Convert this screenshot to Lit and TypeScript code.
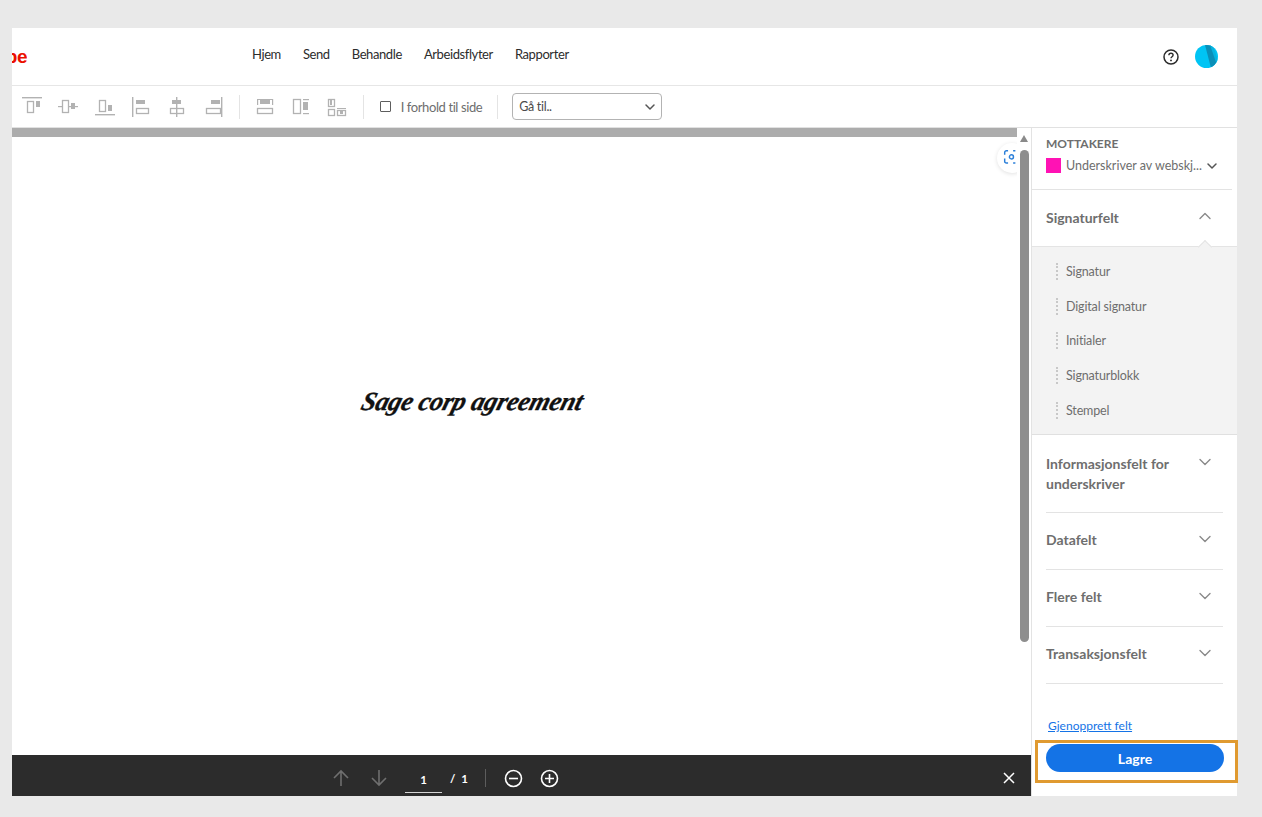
import { LitElement, html, css, svg } from "lit";
import { customElement } from "lit/decorators.js";

const G = "#b2b2b2";
const box = (x: number, y: number, w: number, h: number) =>
  svg`<rect x=${x + 0.5} y=${y + 0.5} width=${w} height=${h} fill="none" stroke=${G} stroke-width="1.3"/>`;
const fill = (x: number, y: number, w: number, h: number) =>
  svg`<rect x=${x} y=${y} width=${w} height=${h} fill=${G}/>`;

const alignIcons = [
  [fill(1, 1, 20, 1.4), box(6, 5, 6, 11), fill(15, 5, 4, 6)],
  [fill(1, 10, 4, 1.2), fill(11, 10, 10, 1.2), box(5, 4, 6, 12), fill(14, 7, 4, 6)],
  [fill(1, 18, 20, 1.4), box(5, 4, 6, 11), fill(14, 9, 4, 6)],
  [fill(2, 1, 1.4, 20), box(6, 12, 12, 5), fill(6, 4, 9, 4)],
  [fill(10, 1, 1.4, 20), fill(6, 4, 9, 4), box(4, 12, 13, 5)],
  [fill(19, 1, 1.4, 20), fill(9, 4, 9, 4), box(4, 12, 14, 5)],
];
const distIcons = [
  [fill(3, 3, 1.2, 6), fill(18, 3, 1.2, 6), fill(6, 4, 10, 4), box(3, 12, 15, 5), fill(3, 3, 16, 1)],
  [box(3, 3, 7, 14), fill(13, 3, 6, 1.2), fill(13, 6, 5, 8), fill(13, 17, 6, 1.2)],
  [box(2, 3, 6, 7), fill(4, 4, 2, 5), box(2, 13, 6, 6), fill(11, 12, 9, 1), box(11, 14, 8, 5), fill(14, 15, 3, 3)],
];

const chev = (up = false, color = "#8a8a8a") => html`<svg class="chev" width="14" height="14" viewBox="0 0 14 14">
  <path d=${up ? "M2 9.5 7 4.5l5 5" : "M2 4.5l5 5 5-5"} fill="none" stroke=${color} stroke-width="1.4" stroke-linecap="round" stroke-linejoin="round"/>
</svg>`;
const smallChev = (color = "#555") => html`<svg class="chev" width="12" height="12" viewBox="0 0 12 12">
  <path d="M2 4l4 4 4-4" fill="none" stroke=${color} stroke-width="1.5" stroke-linecap="round" stroke-linejoin="round"/>
</svg>`;

@customElement("app-root")
export class AppRoot extends LitElement {
  static styles = css`
    :host { display: block; height: 817px; background: #e9e9e9; padding: 28px 25px 21px 12px; box-sizing: border-box;
      font-family: "Lato", "Open Sans", sans-serif; color: #2c2c2c; overflow: hidden; }
    .frame { height: 768px; background: #fff; display: flex; flex-direction: column; }
    .header { height: 57px; flex: none; display: flex; align-items: center; border-bottom: 1px solid #e6e6e6; padding-right: 19px; }
    .logo { width: 15px; overflow: hidden; display: flex; justify-content: flex-end; font: 700 19px "Liberation Sans", sans-serif; color: #eb1000; letter-spacing: -0.5px; }
    .nav { display: flex; gap: 22px; margin: 0 0 5px 225px; font-size: 13px; letter-spacing: -0.4px; color: #2c2c2c; }
    .nav span { white-space: nowrap; }
    .head-right { margin-left: auto; display: flex; align-items: center; gap: 15px; }
    .toolbar { height: 41px; flex: none; display: flex; align-items: center; padding-left: 9px; border-bottom: 1px solid #e1e1e1; }
    .tool { width: 22px; height: 22px; display: block; flex: none; margin-right: 14.3px; }
    .sep { width: 1px; height: 24px; background: #e4e4e4; flex: none; }
    .s1 { margin: 0 14px 0 0; }
    .s2 { margin: 0 16px 0 0; }
    .check { width: 9px; height: 9px; border: 1.5px solid #5e5e5e; border-radius: 1px; flex: none; }
    .check-label { font-size: 13px; letter-spacing: -0.4px; color: #6e6e6e; margin: 0 15px 0 10px; white-space: nowrap; }
    .select { margin-left: 14px; width: 150px; height: 27px; box-sizing: border-box; border: 1px solid #b3b3b3; border-radius: 4px; display: flex; align-items: center; justify-content: space-between; padding: 0 5px 0 6px; font-size: 12.5px; letter-spacing: -0.3px; color: #4b4b4b; }
    .main { flex: 1; display: flex; min-height: 0; }
    .left { width: 1019px; flex: none; display: flex; flex-direction: column; position: relative; }
    .doc-row { flex: 1; display: flex; min-height: 0; }
    .doc { flex: 1; display: flex; flex-direction: column; }
    .band { height: 9px; background: #acacac; flex: none; }
    .page { flex: 1; display: flex; justify-content: center; padding: 249px 85px 0 0; box-sizing: border-box; }
    .sig { font: italic 700 26px "Liberation Serif", serif; color: #111; white-space: nowrap; transform: skewX(-16deg); height: 32px; line-height: 32px; letter-spacing: -0.25px; -webkit-text-stroke: 0.35px #111; }
    .scroll { width: 14px; flex: none; display: flex; flex-direction: column; align-items: center; padding-top: 7px; box-sizing: border-box; position: relative; z-index: 1; background: #fff; }
    .arrow { width: 0; height: 0; border-left: 4.5px solid transparent; border-right: 4.5px solid transparent; border-bottom: 7px solid #8a8a8a; }
    .thumb { width: 9px; height: 492px; background: #8e8e8e; border-radius: 5px; margin-top: 8px; }
    .scan { position: absolute; left: 985px; top: 15px; width: 30px; height: 30px; border-radius: 50%; background: #fff; box-shadow: 0 1px 4px rgba(0,0,0,.12); display: flex; align-items: center; justify-content: center; }
    .bar { height: 41px; box-sizing: border-box; flex: none; background: #2c2c2c; display: flex; align-items: center; padding: 5px 15px 0 320px; color: #fff; font-size: 11.5px; font-weight: 700; }
    .bar svg { display: block; flex: none; }
    .num { width: 37px; height: 28px; margin: 2px 8px 0 17px; box-sizing: border-box; border-bottom: 1px solid #d5d5d5; display: flex; align-items: center; justify-content: center; flex: none; padding-top: 1px; }
    .of { word-spacing: 3px; white-space: nowrap; width: 35px; flex: none; }
    .bsep { width: 1px; height: 18px; background: #5d5d5d; flex: none; margin-right: 18px; }
    .close { margin-left: auto; }
    .side { flex: 1; min-width: 0; border-left: 1px solid #e3e3e3; display: flex; flex-direction: column; color: #6e6e6e; }
    .rcpt { padding: 8px 0 0 14px; height: 62px; box-sizing: border-box; margin-right: 5px; border-bottom: 1px solid #e3e3e3; flex: none; }
    .rcpt h4 { margin: 0; font-size: 12px; font-weight: 700; line-height: 15px; color: #6e6e6e; }
    .who { display: flex; align-items: center; margin-top: 7px; font-size: 12.5px; white-space: nowrap; }
    .sw { width: 15px; height: 15px; background: #ff12b4; margin-right: 5px; flex: none; }
    .who .chev { margin-left: 4px; }
    .sec { display: flex; justify-content: space-between; align-items: flex-start; margin: 0 14px; font-size: 14px; font-weight: 700; line-height: 20px; color: #6e6e6e; border-bottom: 1px solid #e3e3e3; flex: none; box-sizing: border-box; padding-right: 11px; }
    .sec .chev { margin-top: 1px; }
    .sec.top { border: 0; height: 56px; padding-top: 18px; }
    .sec.info { height: 78px; padding-top: 19px; }
    .sec.one { height: 57px; padding-top: 17px; }
    .sec.one .chev { margin-top: 2px; }
    .panel { background: #f3f3f3; border-top: 1px solid #e4e4e4; border-bottom: 1px solid #e0e0e0; height: 189px; box-sizing: border-box; padding: 7px 0 0 24px; position: relative; flex: none; }
    .notch { position: absolute; left: 168px; top: -5px; width: 9px; height: 9px; background: #f3f3f3; border-left: 1px solid #e4e4e4; border-top: 1px solid #e4e4e4; transform: rotate(45deg); }
    .item { height: 34.7px; display: flex; align-items: center; font-size: 12.5px; letter-spacing: -0.15px; color: #6e6e6e; }
    .grip { width: 0; height: 17px; border-left: 2px dotted #c8c8c8; margin-right: 8px; }
    .foot { margin-top: auto; flex: none; }
    .restore { padding-left: 16px; font-size: 12px; color: #1473e6; text-decoration: underline; line-height: 16px; margin-bottom: 6px; }
    .hl { border: 3px solid #e09a30; height: 43px; box-sizing: border-box; margin: 0 -1px 13px 3px; display: flex; align-items: center; padding-left: 8px; }
    .save { width: 178px; height: 28px; margin-top: -7px; border-radius: 14px; background: #1473e6; color: #fff; font-size: 14px; font-weight: 700; display: flex; align-items: center; justify-content: center; }
  `;

  render() {
    return html`<div class="frame">
      <div class="header">
        <div class="logo"><span>Adobe</span></div>
        <div class="nav"><span>Hjem</span><span>Send</span><span>Behandle</span><span>Arbeidsflyter</span><span>Rapporter</span></div>
        <div class="head-right">
          <svg width="18" height="18" viewBox="0 0 18 18">
            <circle cx="9" cy="9" r="7" fill="none" stroke="#2c2c2c" stroke-width="1.5"/>
            <path d="M6.9 7.2c0-1.3 1-2 2.1-2s2.1.7 2.1 1.9c0 1.6-2.1 1.6-2.1 3.1" fill="none" stroke="#2c2c2c" stroke-width="1.4"/>
            <circle cx="9" cy="12.4" r=".95" fill="#2c2c2c"/>
          </svg>
          <svg width="23" height="23" viewBox="0 0 23 23">
            <defs><clipPath id="av"><circle cx="11.5" cy="11.5" r="11.5"/></clipPath></defs>
            <g clip-path="url(#av)">
              <rect width="23" height="23" fill="#00c4f4"/>
              <path d="M10 0h7l6 23h-7z" fill="#0a8fb8"/>
              <path d="M15 0h3l5 16v7z" fill="#06b3e0"/>
            </g>
          </svg>
        </div>
      </div>
      <div class="toolbar">
        ${alignIcons.map((c) => html`<svg class="tool" viewBox="0 0 22 22">${c}</svg>`)}
        <div class="sep s1"></div>
        ${distIcons.map((c) => html`<svg class="tool" viewBox="0 0 22 22">${c}</svg>`)}
        <div class="sep s2"></div>
        <div class="check"></div>
        <span class="check-label">I forhold til side</span>
        <div class="sep"></div>
        <div class="select"><span>Gå til..</span>${smallChev()}</div>
      </div>
      <div class="main">
        <div class="left">
          <div class="doc-row">
            <div class="doc">
              <div class="band"></div>
              <div class="page"><div class="sig">Sage corp agreement</div></div>
            </div>
            <div class="scroll"><div class="arrow"></div><div class="thumb"></div></div>
          </div>
          <div class="scan">
            <svg width="18" height="18" viewBox="0 0 16 16" fill="none" stroke="#2b7fd9" stroke-width="1.3">
              <path d="M1.5 5V3a1.5 1.5 0 0 1 1.5-1.5h1.5M1.5 8.5V11a1.5 1.5 0 0 0 1.5 1.5h1.5M9 1.5h2M9 12.5h2M13.5 7v1"/>
              <circle cx="7.5" cy="7" r="1.8"/>
            </svg>
          </div>
          <div class="bar">
            <svg width="18" height="18" viewBox="0 0 18 18" fill="none" stroke="#6f6f6f" stroke-width="1.6"><path d="M9 17V2M2 9l7-7 7 7"/></svg>
            <svg style="margin-left:20px" width="18" height="18" viewBox="0 0 18 18" fill="none" stroke="#6f6f6f" stroke-width="1.6"><path d="M9 1v15M2 9l7 7 7-7"/></svg>
            <div class="num">1</div>
            <span class="of">/ 1</span>
            <div class="bsep"></div>
            <svg width="19" height="19" viewBox="0 0 19 19" fill="none" stroke="#fff" stroke-width="1.6"><circle cx="9.5" cy="9.5" r="8"/><path d="M5 9.5h9"/></svg>
            <svg style="margin-left:17px" width="19" height="19" viewBox="0 0 19 19" fill="none" stroke="#fff" stroke-width="1.6"><circle cx="9.5" cy="9.5" r="8"/><path d="M5 9.5h9M9.5 5v9"/></svg>
            <svg class="close" width="14" height="14" viewBox="0 0 14 14" fill="none" stroke="#fff" stroke-width="1.5"><path d="M2 2l10 10M12 2 2 12"/></svg>
          </div>
        </div>
        <div class="side">
          <div class="rcpt">
            <h4>MOTTAKERE</h4>
            <div class="who"><span class="sw"></span><span>Underskriver av webskj...</span>${smallChev()}</div>
          </div>
          <div class="sec top"><span>Signaturfelt</span>${chev(true)}</div>
          <div class="panel">
            <div class="notch"></div>
            ${["Signatur", "Digital signatur", "Initialer", "Signaturblokk", "Stempel"].map(
              (t) => html`<div class="item"><span class="grip"></span>${t}</div>`
            )}
          </div>
          <div class="sec info"><span>Informasjonsfelt for<br />underskriver</span>${chev()}</div>
          <div class="sec one"><span>Datafelt</span>${chev()}</div>
          <div class="sec one"><span>Flere felt</span>${chev()}</div>
          <div class="sec one"><span>Transaksjonsfelt</span>${chev()}</div>
          <div class="foot">
            <div class="restore">Gjenopprett felt</div>
            <div class="hl"><div class="save">Lagre</div></div>
          </div>
        </div>
      </div>
    </div>`;
  }
}
